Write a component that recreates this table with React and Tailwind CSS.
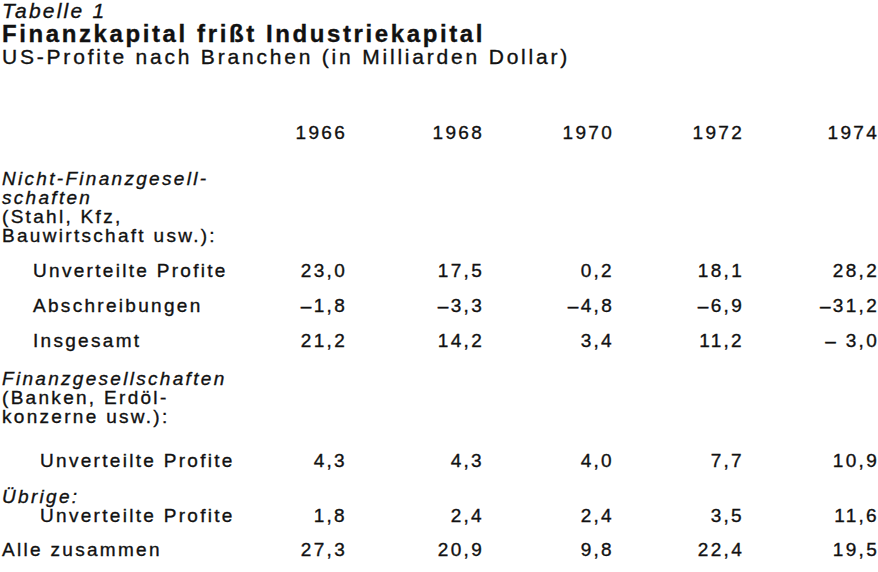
import React from 'react';

const years = ['1966', '1968', '1970', '1972', '1974'];

const rows = [
    { label: 'Nicht-Finanzgesell-', italic: true, gap: 'mt-[27px]' },
    { label: 'schaften', italic: true },
    { label: '(Stahl, Kfz,' },
    { label: 'Bauwirtschaft usw.):' },
    { label: 'Unverteilte Profite', indent: 'pl-[31px]', gap: 'mt-[16px]', values: ['23,0', '17,5', '0,2', '18,1', '28,2'] },
    { label: 'Abschreibungen', indent: 'pl-[31px]', gap: 'mt-[16px]', values: ['–1,8', '–3,3', '–4,8', '–6,9', '–31,2'] },
    { label: 'Insgesamt', indent: 'pl-[31px]', gap: 'mt-[16px]', values: ['21,2', '14,2', '3,4', '11,2', '– 3,0'] },
    { label: 'Finanzgesellschaften', italic: true, gap: 'mt-[19px]' },
    { label: '(Banken, Erdöl-' },
    { label: 'konzerne usw.):' },
    { label: 'Unverteilte Profite', indent: 'pl-[38px]', gap: 'mt-[25px]', values: ['4,3', '4,3', '4,0', '7,7', '10,9'] },
    { label: 'Übrige:', italic: true, gap: 'mt-[17px]' },
    { label: 'Unverteilte Profite', indent: 'pl-[38px]', values: ['1,8', '2,4', '2,4', '3,5', '11,6'] },
    { label: 'Alle zusammen', gap: 'mt-[15px]', values: ['27,3', '20,9', '9,8', '22,4', '19,5'] },
];

function Row({ label, values = [], italic, indent = '', gap = '' }) {
    return (
        <div className={`grid grid-cols-[248px_97px_137px_130px_130px_135px] ${gap}`}>
            <div className={`whitespace-nowrap ${indent} ${italic ? 'italic' : ''}`}>{label}</div>
            {[0, 1, 2, 3, 4].map(i => (
                <div key={i} className="text-right whitespace-nowrap">{values[i] || ''}</div>
            ))}
        </div>
    );
}

export default function App() {
    return (
        <div className="w-[878px] h-[572px] overflow-hidden bg-white text-[#111] pl-[2px] font-['Liberation_Sans',Arial,sans-serif] [-webkit-text-stroke:0.35px_#111]">
            <p className="italic text-[21px] leading-[22px] tracking-[2.2px]">Tabelle 1</p>
            <h1 className="font-bold text-[24px] leading-[24px] tracking-[2.6px]">Finanzkapital frißt Industriekapital</h1>
            <p className="text-[21px] leading-[21px] tracking-[2.8px]">US-Profite nach Branchen (in Milliarden Dollar)</p>

            <div className="text-[19px] leading-[19px] tracking-[2.3px]">
                <Row values={years} gap="mt-[56px]" />
                {rows.map((r, i) => (
                    <Row key={i} {...r} />
                ))}
            </div>
        </div>
    );
}
